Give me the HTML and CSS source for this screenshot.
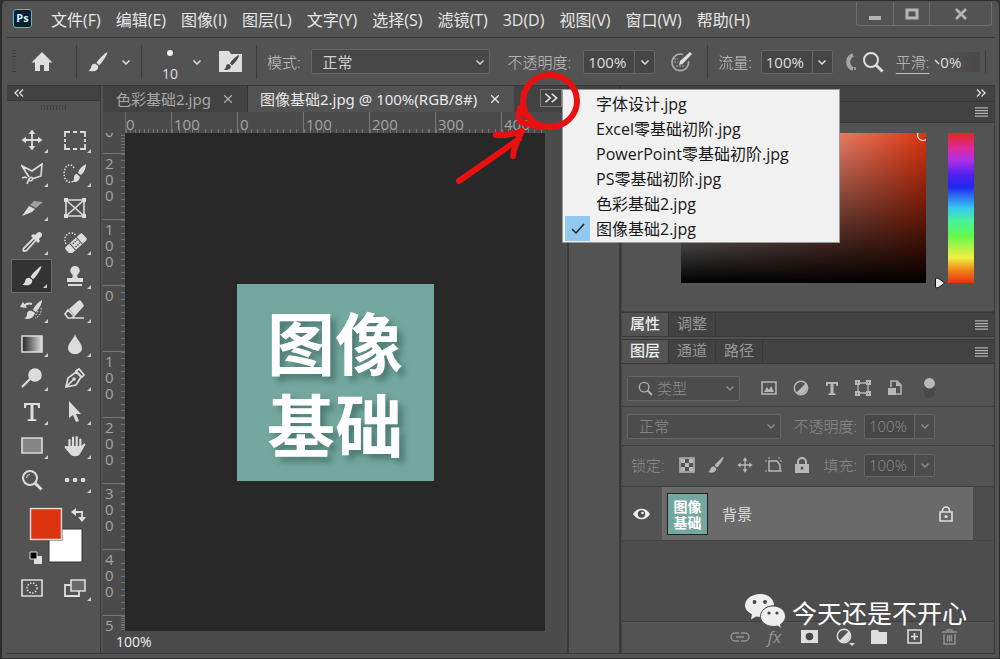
FILE: index.html
```
<!DOCTYPE html>
<html lang="zh-CN">
<head>
<meta charset="utf-8">
<meta name="viewport" content="width=device-width, initial-scale=1">
<title>图像基础2.jpg</title>
<link rel="stylesheet" href="styles.css">
</head>
<body>
<svg class="defs" aria-hidden="true">
  <symbol id="chev" viewBox="0 0 10 10"><path d="M1.500 3.500 5 7l3.500-3.500" fill="none" stroke="currentColor" stroke-width="1.500"/></symbol>
  <symbol id="dbl" viewBox="0 0 10 10"><path d="M1 1.500 4.500 5 1 8.500M5.500 1.500 9 5 5.500 8.500" fill="none" stroke="currentColor" stroke-width="1.300"/></symbol>
  <symbol id="lines" viewBox="0 0 14 12"><path d="M0 1.500h14M0 4.500h14M0 7.500h14M0 10.500h14" stroke="currentColor" stroke-width="1.300"/></symbol>
  <symbol id="brush" viewBox="0 0 22 22"><path d="M20.500 1c-1.500.3-9.500 7.500-11 10.800l2.600 2.400C14.800 12.500 20.800 3 20.500 1z" fill="currentColor"/><path d="M8.600 12.900c-2.300-.4-4 .9-4.400 2.800-.3 1.700-1 3-2.700 3.800 3.200 1.600 8.200 1 9.400-2 .5-1.200.4-2.200-.1-2.900z" fill="currentColor"/></symbol>
  <symbol id="move" viewBox="0 0 22 22"><path d="M11 3v16M3 11h16" stroke="currentColor" stroke-width="1.800"/><path d="M11 .5 14.300 5H7.700zM11 21.500 7.700 17h6.600zM.5 11 5 7.700v6.600zM21.500 11 17 14.300V7.700z" fill="currentColor"/></symbol>
  <symbol id="search" viewBox="0 0 22 22"><circle cx="9" cy="9" r="7" fill="none" stroke="currentColor" stroke-width="2"/><path d="m14 14 6.500 6.500" stroke="currentColor" stroke-width="2.800"/></symbol>
  <symbol id="half" viewBox="0 0 16 16"><circle cx="8" cy="8" r="6.700" fill="none" stroke="currentColor" stroke-width="1.400"/><path d="M12.700 3.300A6.700 6.700 0 0 1 3.300 12.700z" fill="currentColor"/></symbol>
</svg>

<div class="window">
  <header class="menubar">
    <span class="logo">Ps</span>
    <nav class="menus">
      <button>文件(F)</button><button>编辑(E)</button><button>图像(I)</button><button>图层(L)</button><button>文字(Y)</button><button>选择(S)</button><button>滤镜(T)</button><button>3D(D)</button><button>视图(V)</button><button>窗口(W)</button><button>帮助(H)</button>
    </nav>
    <div class="caption">
      <button aria-label="最小化"><svg width="14" height="14"><path d="M1 9h12v4H1z" fill="currentColor"/></svg></button>
      <button aria-label="最大化"><svg width="14" height="14"><path d="M2 3h10v8H2z" fill="none" stroke="currentColor" stroke-width="3"/></svg></button>
      <button class="close" aria-label="关闭"><svg width="14" height="14"><path d="m2 2 10 10M12 2 2 12" stroke="currentColor" stroke-width="2.600"/></svg></button>
    </div>
  </header>

  <section class="options" aria-label="画笔选项">
    <i class="grip-v"></i>
    <button class="icon home" aria-label="主页"><svg width="22" height="22"><path d="M11 1 .500 11.500H4V20h5v-6h4v6h5v-8.500h3.500z" fill="currentColor"/></svg></button>
    <i class="divider"></i>
    <button class="icon pair" aria-label="画笔"><svg width="22" height="22"><use href="#brush"/></svg><svg width="10" height="10"><use href="#chev"/></svg></button>
    <i class="divider"></i>
    <button class="icon size" aria-label="画笔大小"><span><i class="dot"></i>10</span><svg width="10" height="10"><use href="#chev"/></svg></button>
    <button class="icon folder" aria-label="画笔设置"><svg width="24" height="22"><path d="M0 0h10l2 3h11v18H0z" fill="currentColor"/><path d="M20 4c-3 1-8 6-9 8.500l2 2C15.500 12.500 20 7 20 4zM10 13c-2 0-3 1-3 2.500S6 18 4.500 18.500c3 1 7 .5 7.500-3z" fill="#484848"/></svg></button>
    <i class="divider"></i>
    <label class="lbl" for="mode">模式:</label>
    <span class="selectbox mode"><select id="mode"><option>正常</option></select><svg width="10" height="10"><use href="#chev"/></svg></span>
    <label class="lbl opacity" for="opacity">不透明度:</label>
    <span class="combo"><input id="opacity" value="100%"><button aria-label="不透明度滑块"><svg width="10" height="10"><use href="#chev"/></svg></button></span>
    <button class="icon pressure" aria-label="压力"><svg width="24" height="24"><path d="M13 4.500A8.300 8.300 0 1 0 18.500 11" fill="none" stroke="currentColor" stroke-width="1.600"/><path d="m9 15 1-4L20 2l2 2-9.500 10z" fill="#dedede"/><path d="M4 9h4M4 12h4M6 16h8" stroke="currentColor" stroke-dasharray="2 1"/></svg></button>
    <i class="divider"></i>
    <label class="lbl" for="flow">流量:</label>
    <span class="combo flow"><input id="flow" value="100%"><button aria-label="流量滑块"><svg width="10" height="10"><use href="#chev"/></svg></button></span>
    <button class="icon air" aria-label="喷枪"><svg width="12" height="20"><path d="M8 3a7.500 7.500 0 0 0 0 14" fill="none" stroke="#a5a5a5" stroke-width="4"/><path d="M10 15v3" stroke="currentColor"/></svg></button>
    <button class="icon" aria-label="搜索"><svg width="22" height="22"><use href="#search"/></svg></button>
    <label class="lbl smooth" for="smooth">平滑:</label>
    <svg class="tick" width="6" height="6"><path d="m1 1 4 4" stroke="currentColor" stroke-width="1.500"/></svg>
    <input class="smooth-value" id="smooth" value="0%">
    <i class="divider end"></i>
  </section>

  <main class="workspace">
    <aside class="tools">
      <button class="collapse" aria-label="折叠"><svg width="10" height="10"><path d="M4.500 1.500 1 5l3.500 3.500M9 1.500 5.500 5 9 8.500" fill="none" stroke="currentColor" stroke-width="1.300"/></svg></button>
      <i class="grip-h"></i>
      <div class="toolgrid">
        <button aria-label="移动"><svg width="22" height="22"><use href="#move"/></svg></button>
        <button aria-label="选框"><svg width="22" height="20"><path d="M1 7V2h5M9 2h4M16 2h5v5M21 9v3M21 14v5h-5M13 19H9M6 19H1v-5M1 12V9" fill="none" stroke="currentColor" stroke-width="1.800"/></svg></button>
        <button aria-label="套索"><svg width="22" height="22"><path d="M8 14 1 3l10 5 10-7-1 12-9 3M6 15l-2-1-3 1M8 16c2-3 5-1 3 1s-3 0-3-1l-2 5" fill="none" stroke="currentColor" stroke-width="1.600"/></svg></button>
        <button aria-label="快速选择"><svg width="24" height="22"><path d="M11 5c-2-4-6-4-8-1s-3 9 0 13 7 2 8 0" fill="none" stroke="currentColor" stroke-width="1.500" stroke-dasharray="1.500 1.500"/><path d="M23 1c-4 2-7 5-8 9l3 2c3-2 5-7 5-11zM14 11c-3 0-3 3-3 5s-1 2-2 2c3 2 7 1 8-4z" fill="currentColor"/></svg></button>
        <button aria-label="切片"><svg width="22" height="22"><path d="M1 19 8 9l6 3-3 3z" fill="currentColor"/><path d="m9 8 4-4 9 1-7 6z" fill="#a0a0a0"/></svg></button>
        <button class="plain" aria-label="图框"><svg width="22" height="20"><path d="M2 2h18v16H2zM2 2l18 16M20 2 2 18" fill="none" stroke="currentColor" stroke-width="1.600"/><path d="M0 0h4v4H0zM18 0h4v4h-4zM0 16h4v4H0zM18 16h4v4h-4z" fill="currentColor"/></svg></button>
        <button aria-label="吸管"><svg width="22" height="22"><path d="M13 7 3 17c-2 3 0 4 3 2L15 9" fill="none" stroke="currentColor" stroke-width="1.800"/><path d="m10 5 2-2 2 1 2-2c3-3 7 1 4 4l-2 2 1 2-2 2z" fill="currentColor"/></svg></button>
        <button aria-label="修复画笔"><svg width="24" height="22"><path d="M3 13C0 8 3 2 8 2c3 0 4 1 5 3" fill="none" stroke="currentColor" stroke-width="1.500" stroke-dasharray="1.500 1.500"/><g transform="rotate(-42 13 12)"><rect x="1" y="8" width="23" height="9" rx="2" fill="currentColor"/><path d="M8 8v9M17 8v9" stroke="#535353"/><path d="M10 10.500h6M10 14.500h6" stroke="#535353" stroke-width="1.500" stroke-dasharray="1.500 1"/></g></svg></button>
        <button class="active" aria-label="画笔"><svg width="22" height="22"><use href="#brush"/></svg></button>
        <button aria-label="仿制图章"><svg width="20" height="22"><path d="M10 1a4.500 4.500 0 0 1 3 8c-1 1-1 3 0 4h5v4H2v-4h5c1-1 1-3 0-4a4.500 4.500 0 0 1 3-8zM3 19h14v2H3z" fill="currentColor"/></svg></button>
        <button aria-label="历史记录画笔"><svg width="24" height="22"><path d="M22 1c-4 2-8 7-9 10l3 2c3-3 6-8 6-12zM12 12c-3-1-5 1-5 3s-1 4-3 4c4 2 9 1 11-5z" fill="currentColor"/><path d="M3 8c3-4 6-4 9-3" fill="none" stroke="currentColor" stroke-width="2"/><path d="m0 8 3-5 4 6z" fill="currentColor"/><path d="M21 9c1 5-2 9-6 10M18 12l-2 4" fill="none" stroke="currentColor" stroke-dasharray="1.500 1.500"/></svg></button>
        <button aria-label="橡皮擦"><svg width="22" height="22"><path d="m1 15 3-4 6 6-2 2H4zM7 19h13" fill="none" stroke="currentColor" stroke-width="1.700"/><path d="m5 10 9-8c1-1 2-1 3 0l2 3c1 1 1 2 0 3l-8 9z" fill="currentColor"/></svg></button>
        <button aria-label="渐变"><svg width="22" height="18"><defs><linearGradient id="gr"><stop stop-color="#222"/><stop offset="1" stop-color="#ddd"/></linearGradient></defs><path d="M1 1h20v16H1z" fill="url(#gr)" stroke="currentColor" stroke-width="1.600"/></svg></button>
        <button aria-label="模糊"><svg width="18" height="22"><path d="M9 1c1 5 7 9 7 14 0 8-14 8-14 0C2 10 8 6 9 1z" fill="currentColor"/></svg></button>
        <button aria-label="减淡"><svg width="22" height="22"><circle cx="14" cy="8" r="6.800" fill="currentColor"/><path d="m1 20 8-8" stroke="currentColor" stroke-width="2.200"/></svg></button>
        <button aria-label="钢笔"><svg width="22" height="22"><path d="M2 20 4 11l8-6 5 5-5 8zM2 20l7-7M12 4l6 6 2-2-5-6z" fill="none" stroke="currentColor" stroke-width="1.700"/><circle cx="10" cy="12" r="1.800" fill="currentColor"/></svg></button>
        <button aria-label="文字"><svg width="18" height="20"><path d="M1 1h16v5h-2l-.500-3H10.500v14l3 .500V19h-9v-1.500l3-.5V3h-4L3 6H1z" fill="currentColor"/></svg></button>
        <button aria-label="路径选择"><svg width="16" height="22"><path d="M2 0v17l4-3 3 7 3-1-3-7h5z" fill="currentColor"/></svg></button>
        <button aria-label="矩形"><svg width="22" height="18"><path d="M1 1h20v15H1z" fill="#858585" stroke="currentColor" stroke-width="1.600"/></svg></button>
        <button aria-label="抓手"><svg width="22" height="22"><path d="M5.500 12V5M9 11V2.500M12.700 11v-9M16.300 12V4.500" stroke="currentColor" stroke-width="2.200" stroke-linecap="round"/><path d="M4.400 11h13l2-2c1.500-1 2.500 0 1.500 1.500L16 19c-2 3-8 3-10 0L1 13c-1-2 1-3 2-1.500z" fill="currentColor"/></svg></button>
        <button class="plain" aria-label="缩放"><svg width="22" height="22"><use href="#search"/><path d="M5.500 9A3.500 3.500 0 0 1 9 5.500" fill="none" stroke="currentColor"/></svg></button>
        <button aria-label="更多"><svg width="22" height="8"><circle cx="3" cy="4" r="2.300" fill="currentColor"/><circle cx="11" cy="4" r="2.300" fill="currentColor"/><circle cx="19" cy="4" r="2.300" fill="currentColor"/></svg></button>
      </div>
      <svg class="swatches" width="58" height="60">
        <path d="M20 22h33v33H20z" fill="#fff" stroke="#333"/>
        <path d="M.500.500h33v33h-33z" fill="#333"/><path d="M1.500 1.500h31v31h-31z" fill="#dc3410" stroke="#e8dcd8" stroke-width="1.500"/>
        <path d="M46 5h7v7" fill="none" stroke="currentColor" stroke-width="1.800"/><path d="m42 5 5-4v8zM53 15l-4-5h8z" fill="currentColor"/>
        <path d="M5 49h8v8H5z" fill="currentColor"/><path d="M1 45h7v7H1z" fill="#000" stroke="currentColor"/>
      </svg>
      <div class="toolgrid">
        <button class="plain" aria-label="快速蒙版"><svg width="22" height="18"><path d="M1 1h20v16H1z" fill="none" stroke="currentColor" stroke-width="1.600"/><circle cx="11" cy="9" r="5" fill="none" stroke="currentColor" stroke-width="1.500" stroke-dasharray="1.500 1.500"/></svg></button>
        <button aria-label="屏幕模式"><svg width="24" height="18"><path d="M2 6h14v11H2z" fill="none" stroke="currentColor" stroke-width="1.800"/><path d="M8 1h14v11H8z" fill="#6a6a6a" stroke="currentColor" stroke-width="1.600"/></svg></button>
      </div>
    </aside>

    <section class="document">
      <div class="tabs">
        <div class="tab"><span>色彩基础2.jpg</span><button aria-label="关闭"><svg width="8" height="8"><path d="m0 0 8 8M8 0 0 8" stroke="currentColor" stroke-width="1.300"/></svg></button></div>
        <div class="tab current"><span>图像基础2.jpg @ 100%(RGB/8#)</span><button aria-label="关闭"><svg width="8" height="8"><path d="m0 0 8 8M8 0 0 8" stroke="currentColor" stroke-width="1.300"/></svg></button></div>
        <div class="more">
          <button aria-label="更多文档"><svg width="14" height="12" viewBox="0 0 10 10" preserveAspectRatio="none"><use href="#dbl"/></svg></button>
          <ul class="dropdown">
            <li><button>字体设计.jpg</button></li>
            <li><button>Excel零基础初阶.jpg</button></li>
            <li><button>PowerPoint零基础初阶.jpg</button></li>
            <li><button>PS零基础初阶.jpg</button></li>
            <li><button>色彩基础2.jpg</button></li>
            <li class="checked"><button>图像基础2.jpg</button><svg width="14" height="12"><path d="m1 6 4 4 8-9" fill="none" stroke="#222" stroke-width="1.500"/></svg></li>
          </ul>
          <svg class="mark" width="130" height="120">
            <g fill="none" stroke="#e81010" stroke-width="6" stroke-linecap="round" stroke-linejoin="round">
              <ellipse cx="97" cy="33" rx="27" ry="26"/>
              <path d="M75 49 67 40c-2 8-2 14 4 15 8 3 16 4 26 4M6 113 66 71M43 67c9 1 18-1 26-4-4 8-8 15-9 25"/>
            </g>
          </svg>
        </div>
      </div>
      <div class="ruler-h"><ol><li class="partial">0</li><li>100</li><li>0</li><li>100</li><li>200</li><li>300</li><li>400</li></ol></div>
      <div class="stage">
        <div class="ruler-v"><ol><li class="partial">0</li><li>200</li><li>100</li><li>0</li><li>100</li><li>200</li><li>300</li><li>400</li><li class="last">5</li></ol></div>
        <div class="canvas"><div class="artwork"><span>图像</span><span>基础</span></div></div>
        <div class="scroll"></div>
      </div>
      <div class="status">100%</div>
    </section>

    <div class="dock"></div>

    <aside class="panels">
      <div class="paneltop"><svg width="10" height="10"><use href="#dbl"/></svg></div>
      <div class="paneltabs first"><button class="burger" aria-label="面板菜单"><svg width="13" height="12"><use href="#lines"/></svg></button></div>
      <div class="picker">
        <div class="field"><svg width="12" height="12"><circle cx="9" cy="2" r="5.500" fill="none" stroke="#fff" stroke-width="1.200"/></svg></div>
        <div class="hue"><svg width="12" height="12"><path d="M1.500 1.500C4 .500 7 3 10.500 6 7 9 4 11.500 1.500 10.500z" fill="#e8e8e8" stroke="#111"/></svg></div>
      </div>
      <div class="paneltabs"><button class="on">属性</button><button>调整</button><button class="burger" aria-label="面板菜单"><svg width="13" height="12"><use href="#lines"/></svg></button></div>
      <div class="paneltabs layers"><button class="on">图层</button><button>通道</button><button>路径</button><button class="burger" aria-label="面板菜单"><svg width="13" height="12"><use href="#lines"/></svg></button></div>
      <div class="row filter">
        <span class="selectbox type"><svg class="lead" width="15" height="15"><use href="#search"/></svg><select aria-label="类型"><option>类型</option></select><svg width="10" height="10"><use href="#chev"/></svg></span>
        <div class="icons">
          <svg width="16" height="14"><path d="M1 1h14v12H1z" fill="none" stroke="currentColor" stroke-width="1.500"/><path d="m3 11 3-5 2 3 2-4 3 6z" fill="currentColor"/></svg>
          <svg width="16" height="16"><use href="#half"/></svg>
          <svg width="14" height="14"><path d="M1 1h12v4h-1.500L11 3H8.500v9l2 .500V14h-7v-1.500l2-.5V3H3l-.5 2H1z" fill="currentColor"/></svg>
          <svg width="16" height="16"><path d="M3 3h10v10H3z" fill="none" stroke="currentColor" stroke-width="1.300"/><path d="M0 0h5v5H0zM11 0h5v5h-5zM0 11h5v5H0zM11 11h5v5h-5z" fill="currentColor"/><path d="M2 2h1v1H2zM13 2h1v1h-1zM2 13h1v1H2zM13 13h1v1h-1z" fill="#535353"/></svg>
          <svg width="16" height="16"><path d="M4 7V1h6l4 4v9H8" fill="none" stroke="currentColor" stroke-width="1.500"/><path d="M9 1v5h5M1 8h8v7H1z" fill="currentColor"/></svg>
        </div>
        <i class="toggle"></i>
      </div>
      <div class="row">
        <span class="selectbox blend"><select aria-label="混合模式"><option>正常</option></select><svg width="10" height="10"><use href="#chev"/></svg></span>
        <label class="push" for="lop">不透明度:</label>
        <span class="combo"><input id="lop" value="100%"><button aria-label="不透明度滑块"><svg width="10" height="10"><use href="#chev"/></svg></button></span>
      </div>
      <div class="row lock">
        <span class="locklabel">锁定:</span>
        <div class="icons">
          <svg width="16" height="16"><path d="M1 1h14v14H1z" fill="none" stroke="currentColor" stroke-width="1.500"/><path d="M2 2h4v4H2zM10 2h4v4h-4zM6 6h4v4H6zM2 10h4v4H2zM10 10h4v4h-4z" fill="currentColor"/></svg>
          <svg width="18" height="18"><use href="#brush"/></svg>
          <svg width="16" height="16"><use href="#move"/></svg>
          <svg width="18" height="16"><path d="M4 4h8l3 4v6H4z" fill="none" stroke="currentColor" stroke-width="1.500"/><path d="M0 4h3M4 0v3M14 0v3M0 14h3M15 14h3M15 4h3" stroke="currentColor" stroke-dasharray="2 1"/></svg>
          <svg width="14" height="16"><path d="M0 7h14v9H0z" fill="currentColor"/><path d="M3 7V5a4 4 0 0 1 8 0v2" fill="none" stroke="currentColor" stroke-width="2"/><circle cx="7" cy="11" r="1.500" fill="#535353"/></svg>
        </div>
        <label class="push" for="fill">填充:</label>
        <span class="combo"><input id="fill" value="100%"><button aria-label="填充滑块"><svg width="10" height="10"><use href="#chev"/></svg></button></span>
      </div>
      <div class="list">
        <div class="layer">
          <button class="eye" aria-label="可见性"><svg width="18" height="12"><path d="M0 6c4-7 13-7 17 0-4 7-13 7-17 0z" fill="currentColor"/><circle cx="8.500" cy="6" r="3.700" fill="#4d4d4d"/><circle cx="9.500" cy="5" r="1.300" fill="currentColor"/></svg></button>
          <div class="layerbody">
            <span class="thumb"><span>图像</span><span>基础</span></span><span class="name">背景</span>
            <svg width="14" height="16"><path d="M1 6h12v9H1zM3.500 6V4.500a3.500 3.500 0 0 1 7 0V6" fill="none" stroke="currentColor" stroke-width="1.600"/><circle cx="7" cy="10.500" r="1.600" fill="currentColor"/></svg>
          </div>
        </div>
      </div>
      <footer class="actions">
        <button class="dim" aria-label="链接"><svg width="20" height="12"><path d="M9 2H5a4 4 0 0 0 0 8h4M11 2h4a4 4 0 0 1 0 8h-4M6 6h8" fill="none" stroke="currentColor" stroke-width="1.500"/></svg></button>
        <button class="dim fx">fx</button>
        <button aria-label="蒙版"><svg width="17" height="13"><path d="M0 0h17v13H0z" fill="currentColor"/><circle cx="8.500" cy="6.500" r="3.800" fill="#484848"/></svg></button>
        <button aria-label="调整图层"><svg width="20" height="18"><use href="#half" x="1" y="0" width="16" height="16"/><path d="M14 15h6l-3 3z" fill="currentColor"/></svg></button>
        <button aria-label="组"><svg width="17" height="14"><path d="M1 0h6l1 2h8v12H0V1z" fill="currentColor"/></svg></button>
        <button aria-label="新建图层"><svg width="15" height="15"><path d="M1 1h13v13H1zM7.500 4v7M4 7.500h7" fill="none" stroke="currentColor" stroke-width="1.600"/></svg></button>
        <button class="dim" aria-label="删除"><svg width="15" height="16"><path d="M0 3h15M5 3V1h5v2M2 5v10h11V5M5.500 6v6.500M7.500 6v6.500M9.500 6v6.500" fill="none" stroke="currentColor" stroke-width="1.400"/></svg></button>
      </footer>
    </aside>
  </main>

  <div class="watermark">
    <svg width="42" height="36"><path d="M15 0c8 0 14 5 14 11.500-8 0-14 5-13 11.500l-5-.5-5 3 1-5C3 18 0 15 0 11.500 0 5 7 0 15 0z" fill="#eee"/><path d="M28 12c7 0 12.500 4.500 12.500 10.500 0 3-2 6-5 8l1 4-4-2.500c-9 2-17-3-17-9.500C15.500 16.500 21 12 28 12z" fill="#eee" stroke="#505050"/><g fill="#444"><circle cx="9.500" cy="8" r="1.900"/><circle cx="20" cy="8" r="1.900"/><circle cx="24" cy="19" r="1.600"/><circle cx="32" cy="19" r="1.600"/></g></svg>
    <span>今天还是不开心</span>
  </div>
</div>
</body>
</html>
```
FILE: styles.css
```
* { box-sizing: border-box; }
body { margin: 0; background: #333; color: #dedede; font: 15px/20px "Open Sans", "Noto Sans CJK SC", sans-serif; }
button, input, select { margin: 0; padding: 0; border: 0; background: none; color: inherit; font: inherit; border-radius: 0; }
select { appearance: none; }
svg { display: block; flex: none; }
ol, ul { margin: 0; padding: 0; list-style: none; }
i { flex: none; }
.defs { position: absolute; width: 0; height: 0; }

.window { position: relative; display: flex; flex-direction: column; height: 100vh; padding: 1px 4px 4px 5px; background: #535353; border: 1px solid #2e2e2e; border-width: 1px 1px 1px 2px; border-radius: 6px 6px 0 0; overflow: hidden; }

.menubar { display: flex; align-items: center; height: 35px; flex: none; padding-bottom: 2px; }
.logo { width: 19px; height: 19px; margin: 0 19px 0 6px; background: #06202e; border: 1px solid #58b8d8; border-radius: 3px; font: bold 11px/16px "Open Sans", sans-serif; text-align: center; color: #d8f2ff; }
.menus { display: flex; gap: 15px; flex: 1; padding-top: 2px; font-size: 16px; color: #e6e6e6; white-space: nowrap; }
.caption { display: flex; align-self: flex-start; height: 24px; margin-right: 3px; border: 1px solid #6e6e6e; border-top: 0; border-radius: 0 0 3px 3px; color: #b4b4b4; }
.caption button { display: grid; place-items: center; width: 36px; }
.caption button + button { border-left: 1px solid #6e6e6e; }
.caption .close { width: 62px; }

.options { display: flex; align-items: center; height: 48px; flex: none; border-top: 1px solid #393939; }
.grip-v { width: 4px; height: 24px; margin-left: 5px; background: repeating-linear-gradient(#444 0 1px, transparent 1px 3px); }
.divider { width: 1px; height: 34px; background: #3c3c3c; }
.icon { display: flex; align-items: center; }
.home { margin: 0 23px 0 15px; }
.pair { gap: 12px; margin: 0 10px; }
.size { gap: 13px; margin: 0 17px 0 19px; }
.size span { display: flex; flex-direction: column; align-items: center; gap: 9px; width: 18px; padding-top: 10px; font-size: 14px; line-height: 18px; }
.dot { width: 6px; height: 6px; border-radius: 50%; background: #eee; }
.folder { margin-right: 13px; }
.lbl { margin-left: 10px; color: #c4c4c4; font-weight: 300; white-space: nowrap; }
.selectbox { display: flex; align-items: center; height: 25px; border: 1px solid #666; border-radius: 2px; background: #474747; padding: 0 4px 0 11px; }
.selectbox select { flex: 1; min-width: 0; }
.mode { width: 179px; margin: 0 8px 0 10px; color: #d0d0d0; }
.combo { display: flex; height: 24px; border: 1px solid #666; border-radius: 2px; background: #454545; }
.combo input { width: 50px; padding-left: 4px; }
.combo button { display: grid; place-items: center; width: 20px; border-left: 1px solid #666; }
.opacity { margin-right: 12px; }
.pressure { margin: 0 13px 0 15px; color: #aaa; }
.flow { margin-left: 9px; }
.air { margin: 0 5px 0 12px; }
.smooth { margin-left: 12px; text-decoration: underline; text-underline-offset: 5px; }
.tick { margin-left: 5px; }
.smooth-value { width: 40px; height: 20px; background: linear-gradient(90deg, transparent, #494949); }
.end { height: 22px; margin-left: 5px; }

.workspace { display: flex; flex: 1; min-height: 0; border: 1px solid #393939; border-left-width: 0; border-right-width: 0; }
.tools { width: 94px; flex: none; border-right: 1px solid #393939; display: flex; flex-direction: column; }
.collapse { height: 15px; padding-left: 7px; background: #424242; border-bottom: 1px solid #393939; flex: none; }
.grip-h { width: 26px; height: 5px; margin-top: 4px; align-self: center; background: repeating-linear-gradient(90deg, #3f3f3f 0 1px, transparent 1px 3px); }
.toolgrid { display: grid; grid-template-columns: 41px 41px; column-gap: 2px; grid-auto-rows: 34px; margin: 13px 0 0 4px; }
.toolgrid button { position: relative; display: grid; place-items: center; color: #dcdcdc; }
.toolgrid button::after { content: ""; position: absolute; right: 4px; bottom: 4px; border: 2px solid transparent; border-right-color: #ccc; border-bottom-color: #ccc; }
.toolgrid .plain::after { display: none; }
.toolgrid .active { background: #333; border: 1px solid #6a6a6a; }
.swatches { margin: 10px 0 0 22px; }
.swatches + .toolgrid { margin-top: 4px; }

.document { flex: 1; min-width: 0; display: flex; flex-direction: column; margin-left: 2px; background: #4b4b4b; }
.tabs { display: flex; height: 26px; flex: none; background: #424242; font-family: "Noto Sans", "Noto Sans CJK SC", sans-serif; }
.tab { display: flex; align-items: center; gap: 13px; padding: 0 15px 0 13px; color: #a8a8a8; white-space: nowrap; line-height: 24px; }
.tab.current { gap: 14px; background: #525252; color: #e8e8e8; border-left: 1px solid #333; padding: 0 15px 0 12px; }
.more { position: relative; margin: 3px 5px 0 auto; }
.more > button { display: grid; place-items: center; width: 22px; height: 18px; border: 1px solid #777; }
.dropdown { position: absolute; z-index: 2; left: 100%; top: 0; width: 278px; padding: 1px 2px; background: #f1f1f1; border: 1px solid #999; color: #181818; font: 16px/24px "Open Sans", "Noto Sans CJK SC", sans-serif; }
.dropdown li { position: relative; height: 25px; }
.dropdown button { width: 100%; height: 25px; padding-left: 31px; text-align: left; white-space: nowrap; }
.dropdown .checked { background: linear-gradient(90deg, #90c8f0 25px, transparent 25px); }
.dropdown .checked svg { position: absolute; left: 6px; top: 7px; }
.mark { position: absolute; z-index: 3; left: -87px; top: -21px; pointer-events: none; }
.ruler-h { height: 21px; margin-left: 22px; margin-right: 23px; overflow: hidden; flex: none; color: #a5a5a5; border-left: 1px solid #666; }
.ruler-h ol { display: flex; }
.ruler-h li { flex: none; width: 66px; height: 21px; padding-left: 2px; line-height: 24px; border-left: 1px solid #777; background: repeating-linear-gradient(90deg, #737373 0 1px, transparent 1px 10%) bottom / 100% 4px no-repeat; }
.ruler-h .partial { width: 45px; padding-left: 0; border: 0; }
.stage { display: flex; flex: 1; min-height: 0; }
.ruler-v { width: 22px; flex: none; overflow: hidden; color: #a5a5a5; }
.ruler-v ol { margin-top: -10px; }
.ruler-v li { height: 66px; padding: 1px 11px 0 2px; line-height: 16px; word-break: break-all; border-top: 1px solid #777; background: repeating-linear-gradient(#737373 0 1px, transparent 1px 10%) right / 4px 100% no-repeat; }
.ruler-v .partial { height: 30px; padding-top: 0; border: 0; }
.ruler-v .last { height: 20px; }
.canvas { flex: 1; display: grid; place-items: center; background: #282828; overflow: hidden; }
.artwork { display: grid; place-content: center; width: 197px; height: 197px; background: #74a89f; color: #fff; font: bold 68px/82px "Noto Sans CJK SC", sans-serif; text-shadow: 5px 5px 6px rgba(50, 90, 84, .6); }
.scroll { width: 22px; background: #4b4b4b; border-right: 1px solid #555; }
.status { height: 22px; flex: none; padding-left: 13px; color: #eee; line-height: 22px; font-size: 14px; }

.dock { width: 54px; flex: none; border-left: 2px solid #393939; border-right: 2px solid #393939; background: linear-gradient(#424242 15px, #535353 15px); }
.panels { width: 374px; flex: none; display: flex; flex-direction: column; border-left: 1px solid #464646; border-right: 1px solid #393939; }
.paneltop { height: 15px; flex: none; padding: 2px 8px 0 0; background: #424242; }
.paneltop svg { margin-left: auto; }
.paneltabs { display: flex; height: 25px; flex: none; background: #424242; border: 1px solid #373737; border-width: 1px 0; color: #979797; line-height: 20px; }
.paneltabs.first { height: 22px; }
.paneltabs button { display: flex; padding: 0 8px; border-right: 1px solid #383838; }
.paneltabs .on { background: #535353; color: #eee; font-weight: 500; }
.paneltabs .burger { align-items: center; margin-left: auto; border: 0; padding: 0 6px 0 0; color: #b0b0b0; }
.paneltabs.layers { margin-top: 2px; }
.picker { display: flex; justify-content: flex-end; gap: 22px; padding: 10px 20px 28px 59px; border-bottom: 1px solid #444; }
.field { flex: 1; height: 150px; display: flex; justify-content: flex-end; overflow: hidden; background: linear-gradient(transparent, #000), linear-gradient(90deg, #fff, #dc3410); }
.hue { position: relative; width: 26px; height: 150px; background: linear-gradient(#e02820, #e0289a 10%, #b030e8 18%, #5020f0 28%, #2028f0 36%, #38c8f0 50%, #48f0a0 58%, #60f850 68%, #f0f040 83%, #f08018 92%, #e83010); }
.hue svg { position: absolute; left: -14px; bottom: -6px; }

.row { display: flex; align-items: center; height: 39px; flex: none; padding: 0 59px 0 5px; border-bottom: 1px solid #404040; color: #8c8c8c; font-weight: 300; }
.row .selectbox, .row .combo { background: #4c4c4c; border-color: #656565; height: 25px; color: #8c8c8c; }
.row .combo button { border-color: #656565; }
.row input { width: 49px; font-weight: 300; background: #474747; }
.filter { height: 43px; padding-top: 6px; }
.type { width: 113px; padding-left: 10px; }
.type .lead { margin-right: 4px; color: #b0b0b0; }
.blend { width: 154px; }
.push { margin: 0 7px 0 auto; white-space: nowrap; }
.icons { display: flex; align-items: center; color: #b8b8b8; }
.filter .icons { gap: 16px; margin-left: 21px; }
.row.lock { height: 41px; padding-bottom: 2px; }
.lock .icons { gap: 12px; margin-left: 14px; }
.lock .combo { height: 23px; }
.locklabel { margin-left: 4px; white-space: nowrap; }
.toggle { width: 11px; height: 20px; margin: 0 0 0 auto; border-radius: 6px; background: radial-gradient(circle at 50% 5px, #b8b8b8 5px, transparent 6px), #484848; }
.list { flex: 1; min-height: 0; background: #4d4d4d; border-bottom: 1px solid #404040; }
.layer { display: flex; height: 54px; padding-right: 21px; border-bottom: 1px solid #444; }
.eye { display: grid; place-items: center; width: 40px; background: #535353; color: #eee; }
.layerbody { display: flex; flex: 1; align-items: center; padding: 0 20px 0 5px; background: #6a6a6a; }
.thumb { display: grid; place-content: center; width: 41px; height: 42px; border: 1px solid #222; background: #74a89f; color: #fff; font: bold 14px/16px "Noto Sans CJK SC", sans-serif; }
.name { flex: 1; margin-left: 14px; }
.actions { display: flex; align-items: center; justify-content: flex-end; height: 31px; flex: none; padding: 0 27px 2px 0; color: #dedede; }
.actions button { display: grid; place-items: center; width: 35px; height: 28px; }
.actions .dim { color: #929292; }
.actions .fx { font-style: italic; font-size: 17px; }

.watermark { position: absolute; z-index: 4; right: 32px; bottom: 28px; display: flex; align-items: center; gap: 5px; color: #fff; font: 25px/32px "Noto Sans CJK SC", sans-serif; white-space: nowrap; }
```
